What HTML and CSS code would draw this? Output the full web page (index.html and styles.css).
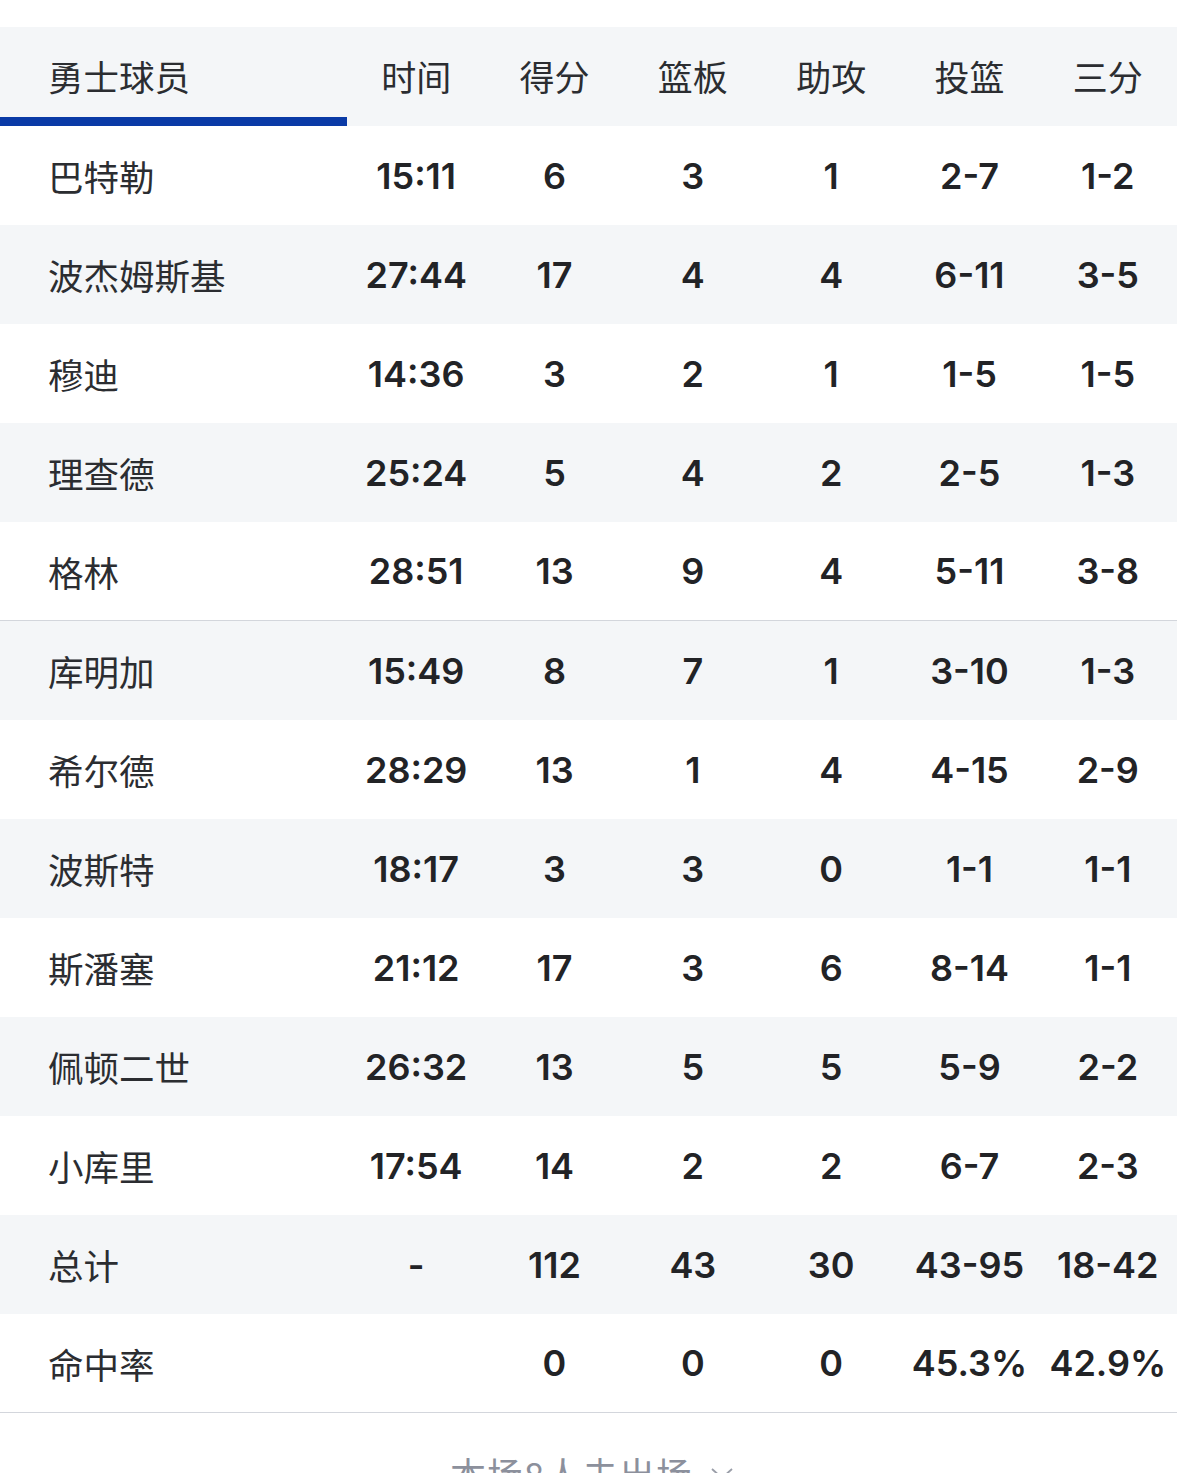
FILE: index.html
```html
<!DOCTYPE html>
<html lang="zh-CN">
<head>
<meta charset="utf-8">
<title>勇士球员数据</title>
<link rel="stylesheet" href="styles.css">
</head>
<body>
<div class="page">
  <div class="table">
    <div class="row head">
      <div class="name tab-active">勇士球员</div>
      <div class="cell">时间</div>
      <div class="cell">得分</div>
      <div class="cell">篮板</div>
      <div class="cell">助攻</div>
      <div class="cell">投篮</div>
      <div class="cell">三分</div>
    </div>
    <div class="row">
      <div class="name">巴特勒</div>
      <div class="cell num">15:11</div><div class="cell num">6</div><div class="cell num">3</div><div class="cell num">1</div><div class="cell num">2-7</div><div class="cell num">1-2</div>
    </div>
    <div class="row alt">
      <div class="name">波杰姆斯基</div>
      <div class="cell num">27:44</div><div class="cell num">17</div><div class="cell num">4</div><div class="cell num">4</div><div class="cell num">6-11</div><div class="cell num">3-5</div>
    </div>
    <div class="row">
      <div class="name">穆迪</div>
      <div class="cell num">14:36</div><div class="cell num">3</div><div class="cell num">2</div><div class="cell num">1</div><div class="cell num">1-5</div><div class="cell num">1-5</div>
    </div>
    <div class="row alt">
      <div class="name">理查德</div>
      <div class="cell num">25:24</div><div class="cell num">5</div><div class="cell num">4</div><div class="cell num">2</div><div class="cell num">2-5</div><div class="cell num">1-3</div>
    </div>
    <div class="row starters-end">
      <div class="name">格林</div>
      <div class="cell num">28:51</div><div class="cell num">13</div><div class="cell num">9</div><div class="cell num">4</div><div class="cell num">5-11</div><div class="cell num">3-8</div>
    </div>
    <div class="row alt">
      <div class="name">库明加</div>
      <div class="cell num">15:49</div><div class="cell num">8</div><div class="cell num">7</div><div class="cell num">1</div><div class="cell num">3-10</div><div class="cell num">1-3</div>
    </div>
    <div class="row">
      <div class="name">希尔德</div>
      <div class="cell num">28:29</div><div class="cell num">13</div><div class="cell num">1</div><div class="cell num">4</div><div class="cell num">4-15</div><div class="cell num">2-9</div>
    </div>
    <div class="row alt">
      <div class="name">波斯特</div>
      <div class="cell num">18:17</div><div class="cell num">3</div><div class="cell num">3</div><div class="cell num">0</div><div class="cell num">1-1</div><div class="cell num">1-1</div>
    </div>
    <div class="row">
      <div class="name">斯潘塞</div>
      <div class="cell num">21:12</div><div class="cell num">17</div><div class="cell num">3</div><div class="cell num">6</div><div class="cell num">8-14</div><div class="cell num">1-1</div>
    </div>
    <div class="row alt">
      <div class="name">佩顿二世</div>
      <div class="cell num">26:32</div><div class="cell num">13</div><div class="cell num">5</div><div class="cell num">5</div><div class="cell num">5-9</div><div class="cell num">2-2</div>
    </div>
    <div class="row">
      <div class="name">小库里</div>
      <div class="cell num">17:54</div><div class="cell num">14</div><div class="cell num">2</div><div class="cell num">2</div><div class="cell num">6-7</div><div class="cell num">2-3</div>
    </div>
    <div class="row alt">
      <div class="name">总计</div>
      <div class="cell num">-</div><div class="cell num">112</div><div class="cell num">43</div><div class="cell num">30</div><div class="cell num">43-95</div><div class="cell num">18-42</div>
    </div>
    <div class="row last">
      <div class="name">命中率</div>
      <div class="cell num"></div><div class="cell num">0</div><div class="cell num">0</div><div class="cell num">0</div><div class="cell num">45.3%</div><div class="cell num">42.9%</div>
    </div>
  </div>
  <div class="more"><span class="more-text">本场8人未出场</span><svg class="chev" width="26" height="16" viewBox="0 0 26 16"><path d="M3 3 L13 12 L23 3" fill="none" stroke="#9a9ea8" stroke-width="1.8"/></svg></div>
</div>
</body>
</html>
```

FILE: styles.css
```css
html, body {
  margin: 0;
  padding: 0;
  background: #ffffff;
}

.page {
  width: 1177px;
  padding-top: 27px;
  font-family: "Noto Sans CJK SC", "Noto Sans", sans-serif;
  color: #333333;
}

.table {
  display: flex;
  flex-direction: column;
}

.row {
  display: flex;
  align-items: stretch;
  height: 99px;
  box-sizing: border-box;
}

.row.alt,
.row.head {
  background: #f4f6f8;
}

.row.starters-end,
.row.last {
  border-bottom: 1px solid #d3d6dc;
}

.name {
  width: 347px;
  flex: none;
  box-sizing: border-box;
  padding-left: 48px;
  display: flex;
  align-items: center;
  font-size: 35.5px;
  color: #2b2d31;
  white-space: nowrap;
}

.head .name,
.head .cell {
  padding-bottom: 3px;
}

.tab-active {
  border-bottom: 9px solid #0a3aa6;
  padding-top: 9px;
}

.cell {
  flex: 1 1 0;
  display: flex;
  align-items: center;
  justify-content: center;
  font-size: 35px;
  color: #2b2d31;
  white-space: nowrap;
}

.num {
  font-family: "Inter", "Noto Sans", sans-serif;
  font-weight: 600;
  font-size: 36px;
  color: #222326;
}

.more {
  display: flex;
  justify-content: center;
  align-items: flex-start;
  gap: 16px;
  padding-top: 34px;
  padding-left: 8px;
  font-size: 36px;
  line-height: 52px;
  color: #8c909c;
}

.more-text {
  letter-spacing: 1px;
}

.chev {
  margin-top: 19px;
}
```
